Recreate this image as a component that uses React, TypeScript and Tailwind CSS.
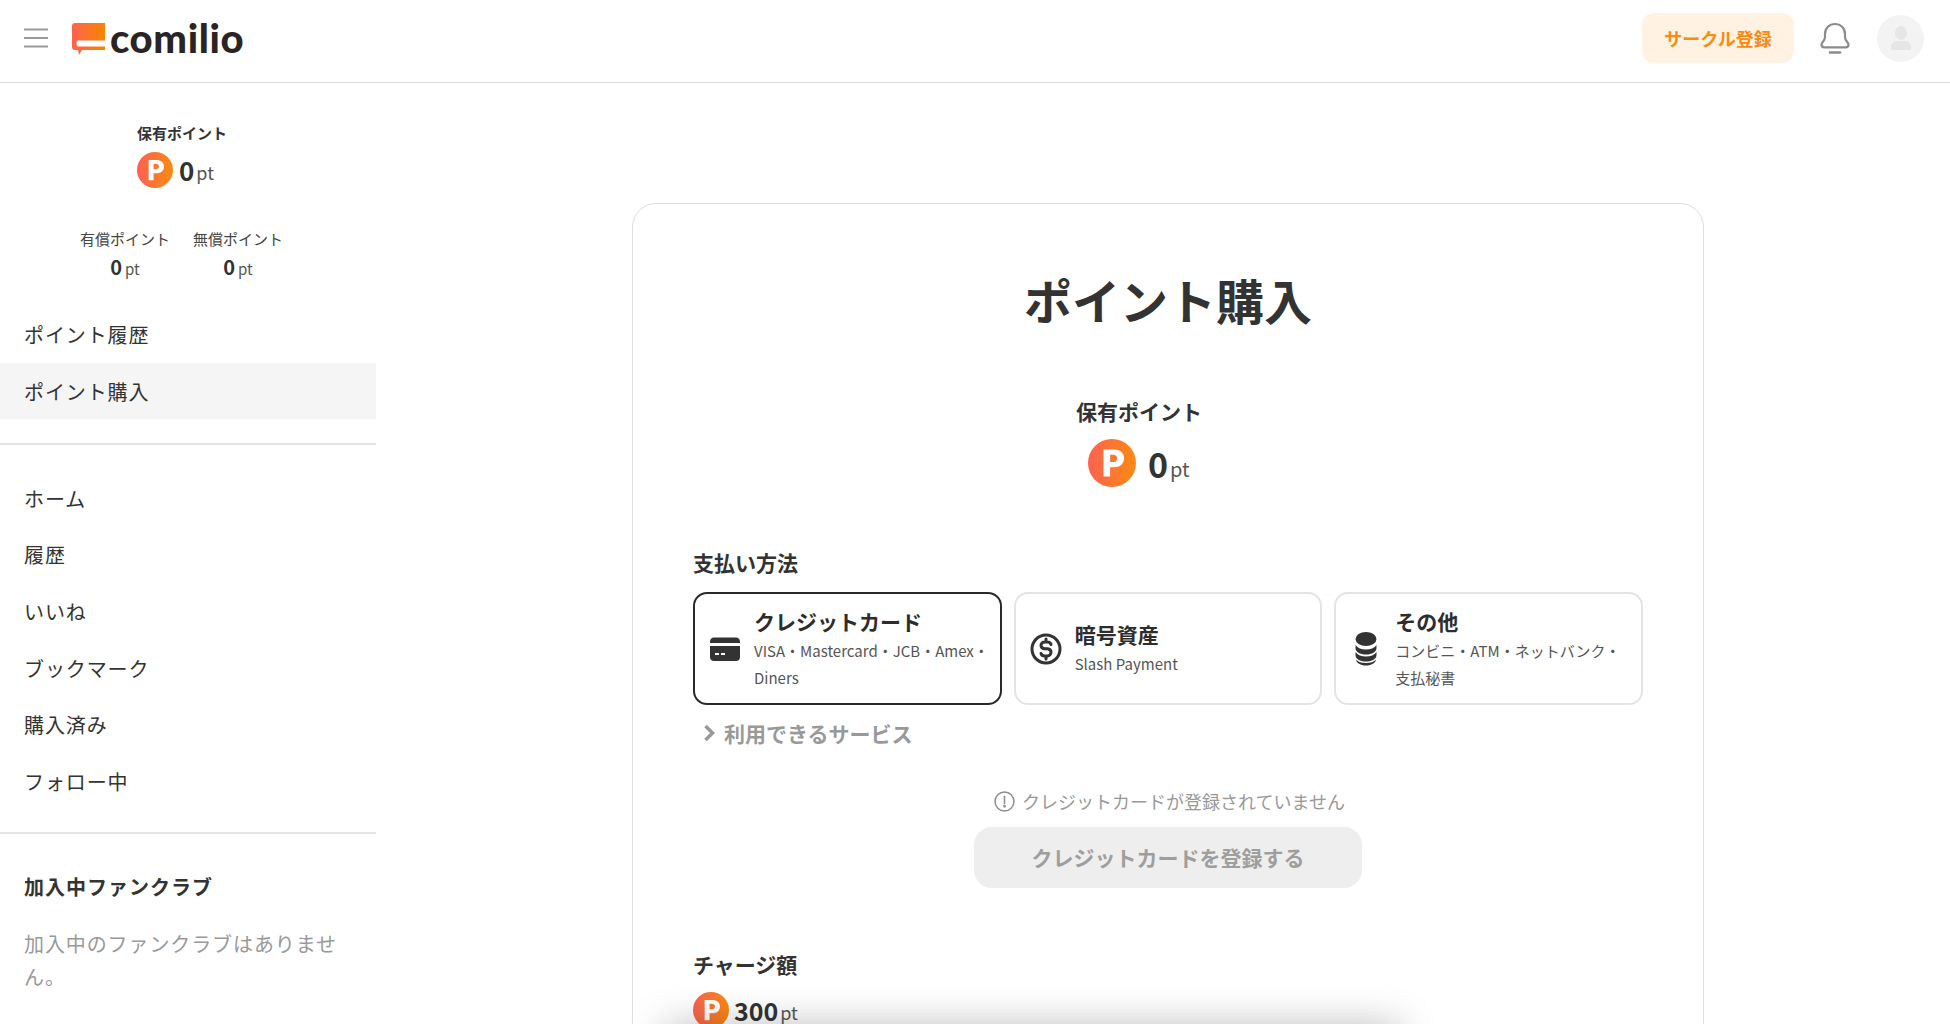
import React from "react";

const font = { fontFamily: '"Noto Sans CJK JP", "Noto Sans", sans-serif' };

function PIcon({ size, id }: { size: number; id: string }) {
  return (
    <svg width={size} height={size} viewBox="0 0 48 48" className="shrink-0">
      <defs>
        <linearGradient id={id} x1="0" y1="0" x2="1" y2="0">
          <stop offset="0" stopColor="#fb6252" />
          <stop offset="1" stopColor="#fb8a12" />
        </linearGradient>
      </defs>
      <circle cx="24" cy="24" r="24" fill={`url(#${id})`} />
      <path
        fillRule="evenodd"
        fill="#fff"
        d="M15.5 10.5h10.2c6.4 0 10.3 3.2 10.3 8.8 0 5.7-4 9-10.3 9h-3.6v9.2h-6.6zM22.1 15.8v7.3h3c2.6 0 4.1-1.3 4.1-3.700 0-2.400-1.500-3.600-4.100-3.600z"
      />
    </svg>
  );
}

function Logo() {
  return (
    <div className="flex items-center ml-[24px]">
      <svg width="33" height="32" viewBox="0 0 33 32" className="shrink-0 mt-[1px]">
        <defs>
          <linearGradient id="lg" x1="0" y1="0" x2="1" y2="0">
            <stop offset="0" stopColor="#fb6250" />
            <stop offset="1" stopColor="#fb8500" />
          </linearGradient>
        </defs>
        <path
          fill="url(#lg)"
          d="M3 0H33V17.500H6C5 17.500 4.500 19 4.500 20C4.500 22 5 23 6 23.500H33V27H10L7 32L6 27H3C1 27 0 26 0 24V3C0 1 1 0 3 0Z"
        />
      </svg>
      <span
        className="ml-[5px] text-[40px] font-black leading-none text-[#2a2422] tracking-[0.6px]"
        style={{ fontFamily: 'Lato, sans-serif' }}
      >
        comilio
      </span>
    </div>
  );
}

function Header() {
  return (
    <header className="h-[83px] shrink-0 flex items-center justify-between border-b border-[#dcdcdc] pl-6 pr-[26px] pb-[6px]">
      <div className="flex items-center">
        <svg width="24" height="20" viewBox="0 0 24 20" className="shrink-0">
          <path d="M0 1.500H24M0 10H24M0 18.500H24" stroke="#9a9a9a" strokeWidth="2" />
        </svg>
        <Logo />
      </div>
      <div className="flex items-center">
        <button className="w-[152px] h-[50px] rounded-[12px] bg-[#fff2e3] text-[#fb8a12] text-[18px] font-bold">
          サークル登録
        </button>
        <svg width="32" height="32" viewBox="0 0 32 32" className="ml-[25px] shrink-0" fill="none" stroke="#8c8c8c" strokeWidth="2.200">
          <path d="M2.500 22.500c0 2 1.200 2.800 3 2.800h21c1.800 0 3-.8 3-2.800 0-2.500-3.500-3.500-3.500-7.500v-3C26 6 21.500 2 16 2S6 6 6 12v3c0 4-3.500 5-3.500 7.500z" strokeLinejoin="round" />
          <path d="M11 30.500h10" strokeLinecap="round" strokeWidth="2.500" />
        </svg>
        <div className="ml-[26px] w-[47px] h-[47px] rounded-full bg-[#f3f3f3] flex items-center justify-center">
          <svg width="22" height="24" viewBox="0 0 22 24" fill="#e6e6e6">
            <ellipse cx="11" cy="7" rx="6" ry="7" />
            <path d="M1 24v-3c0-4 4-6 6-6h8c2 0 6 2 6 6v3z" />
          </svg>
        </div>
      </div>
    </header>
  );
}

function SideItem({ label, active }: { label: string; active?: boolean }) {
  return (
    <div className={`h-[56.700px] flex items-center pl-6 pt-[2px] text-[20px] tracking-[0.900px] text-[#333333] ${active ? "bg-[#f5f5f5]" : ""}`}>
      {label}
    </div>
  );
}

function SubPoint({ label }: { label: string }) {
  return (
    <div className="flex flex-col items-center w-[90px]">
      <div className="text-[15px] leading-[22px] text-[#444444] whitespace-nowrap">{label}</div>
      <div className="mt-[5px] flex items-baseline leading-[24px] text-[#333333]">
        <span className="text-[20px] font-bold">0</span>
        <span className="ml-[3px] text-[15px] text-[#555555]">pt</span>
      </div>
    </div>
  );
}

function Sidebar() {
  return (
    <aside className="w-[376px] shrink-0">
      <div className="pl-[137px] pt-[39px]">
        <div className="text-[15px] font-bold leading-[22px] text-[#333333]">保有ポイント</div>
        <div className="mt-[8px] flex items-center">
          <PIcon size={36} id="p1" />
          <span className="ml-[6px] text-[26px] font-bold leading-none text-[#333333]">0</span>
          <span className="ml-[2px] mt-[3px] text-[18px] leading-none text-[#555555]">pt</span>
        </div>
      </div>
      <div className="mt-[40px] pl-[80px] flex gap-[23px]">
        <SubPoint label="有償ポイント" />
        <SubPoint label="無償ポイント" />
      </div>
      <div className="mt-[25px]">
        <SideItem label="ポイント履歴" />
        <SideItem label="ポイント購入" active />
      </div>
      <div className="mt-[24px] h-[2px] bg-[#e4e4e4]" />
      <div className="mt-[24px]">
        <SideItem label="ホーム" />
        <SideItem label="履歴" />
        <SideItem label="いいね" />
        <SideItem label="ブックマーク" />
        <SideItem label="購入済み" />
        <SideItem label="フォロー中" />
      </div>
      <div className="mt-[22px] h-[2px] bg-[#e4e4e4]" />
      <div className="px-6 mt-[38px]">
        <div className="text-[20px] font-bold leading-[30px] tracking-[1px] text-[#333333]">加入中ファンクラブ</div>
        <div className="mt-[25px] text-[20px] leading-[33px] tracking-[0.900px] text-[#999999]">
          加入中のファンクラブはありません。
        </div>
      </div>
    </aside>
  );
}

function PayCard({ icon, title, sub, active }: { icon: React.ReactNode; title: string; sub: React.ReactNode; active?: boolean }) {
  return (
    <div className={`h-[113px] rounded-[14px] flex items-center pl-[14px] pr-[4px] border-2 ${active ? "border-[#2a2a2a]" : "border-[#e4e4e4]"}`}>
      <div className="w-[32px] flex justify-center shrink-0">{icon}</div>
      <div className="ml-[13px] mb-[2px] min-w-0">
        <div className="text-[21px] font-bold leading-[32px] text-[#2d2d2d]">{title}</div>
        <div className="text-[15px] leading-[27px] text-[#555555]">{sub}</div>
      </div>
    </div>
  );
}

function CardIcon() {
  return (
    <svg width="30" height="24" viewBox="0 0 30 24" fill="#333333">
      <path fillRule="evenodd" d="M0 5C0 2 1.500 .5 4 .5h22c2.500 0 4 1.500 4 4.500v1H0zM0 9h30v11c0 2.500-1.500 4-4 4H4c-2.500 0-4-1.500-4-4zM5 16v2h4v-2zM11 16v2h4v-2z" />
    </svg>
  );
}

function DollarIcon() {
  return (
    <svg width="32" height="32" viewBox="0 0 32 32" fill="none" stroke="#333333" strokeWidth="3">
      <circle cx="16" cy="16" r="14" />
      <path d="M21 11.500c-.5-1.700-2-2.500-3.500-2.500h-3c-2 0-3.500 1.500-3.500 3.300s1.500 3.200 3.500 3.500h3c2 .3 3.500 1.700 3.500 3.500S19.500 23 17.500 23h-3c-1.500 0-3-.8-3.500-2.500M16 6v3M16 23v3" strokeLinecap="round" />
    </svg>
  );
}

function CoinsIcon() {
  return (
    <svg width="22" height="34" viewBox="0 0 22 34" fill="#333333">
      <ellipse cx="11" cy="7" rx="10.500" ry="7" />
      <path d="M.5 13c2 3 6 4.500 10.500 4.500S19.500 16 21.500 13v3c0 4-4.500 6.500-10.500 6.500S.5 20 .5 16z" />
      <path d="M.5 20c2 3 6 4.500 10.500 4.500S19.500 23 21.500 20v3c0 4-4.500 6.500-10.500 6.500S.5 27 .5 23z" />
      <path d="M1 27.500c2 2.500 5.500 3.500 10 3.500s8-1 10-3.500c-.5 3.500-4.500 6-10 6s-9.500-2.500-10-6z" />
    </svg>
  );
}

function Main() {
  return (
    <main className="flex-1 min-w-0 pl-[256px] pt-[120px]">
      <div className="w-[1072px] rounded-[24px] border-[1.500px] border-[#dedede] px-[60px] pt-[59px] pb-[60px]">
        <h1 className="text-center text-[48px] font-bold leading-[72px] text-[#333333]">ポイント購入</h1>
        <div className="mt-[60px] pl-[383px]">
          <div className="text-[21px] font-bold leading-[32px] text-[#333333]">保有ポイント</div>
          <div className="mt-[12px] pl-[12px] flex items-center">
            <PIcon size={48} id="p2" />
            <span className="ml-[12px] mt-[2px] text-[34px] font-bold leading-none text-[#333333]">0</span>
            <span className="ml-[2px] mt-[11px] text-[20px] leading-none text-[#555555]">pt</span>
          </div>
        </div>
        <div className="mt-[59px] text-[21px] font-bold leading-[32px] text-[#333333]">支払い方法</div>
        <div className="mt-[14px] grid grid-cols-3 gap-[12px]">
          <PayCard active icon={<CardIcon />} title="クレジットカード" sub={<>VISA・Mastercard・JCB・Amex・<br />Diners</>} />
          <PayCard icon={<DollarIcon />} title="暗号資産" sub="Slash Payment" />
          <PayCard icon={<CoinsIcon />} title="その他" sub={<>コンビニ・ATM・ネットバンク・<br />支払秘書</>} />
        </div>
        <div className="mt-[12px] pl-[10px] flex items-center">
          <svg width="12" height="18" viewBox="0 0 12 18" fill="none" stroke="#999999" strokeWidth="3.500">
            <path d="M2.500 2L9.500 9L2.500 16" />
          </svg>
          <span className="ml-[9px] text-[21px] font-bold leading-[32px] text-[#999999]">利用できるサービス</span>
        </div>
        <div className="mt-[39px] pl-[3px] flex items-center justify-center">
          <svg width="21" height="21" viewBox="0 0 20 20" fill="none" stroke="#8f8f8f" strokeWidth="1.500">
            <circle cx="10" cy="10" r="9" />
            <path d="M10 5v7" strokeLinecap="round" />
            <circle cx="10" cy="14.500" r=".6" fill="#8f8f8f" />
          </svg>
          <span className="ml-[7px] text-[18px] leading-[27px] text-[#999999]">クレジットカードが登録されていません</span>
        </div>
        <button className="mt-[12px] mx-auto block w-[388px] h-[61px] rounded-[18px] bg-[#eeeeee] text-[21px] font-bold text-[#9e9e9e]">
          クレジットカードを登録する
        </button>
        <div className="mt-[60px] text-[21px] font-bold leading-[32px] text-[#333333]">チャージ額</div>
        <div className="mt-[12px] flex items-center">
          <PIcon size={36} id="p3" />
          <span className="ml-[5px] text-[25px] font-bold leading-none text-[#333333]">300</span>
          <span className="ml-[2px] mt-[3px] text-[18px] leading-none text-[#555555]">pt</span>
        </div>
      </div>
    </main>
  );
}

export default function App() {
  return (
    <div className="relative h-screen overflow-hidden bg-white flex flex-col" style={font}>
      <Header />
      <div className="flex flex-1 min-h-0">
        <Sidebar />
        <Main />
      </div>
      <div className="absolute left-[665px] w-[735px] top-[1026px] h-[40px] shadow-[0_0_40px_0_rgba(0,0,0,0.28)]" />
    </div>
  );
}
